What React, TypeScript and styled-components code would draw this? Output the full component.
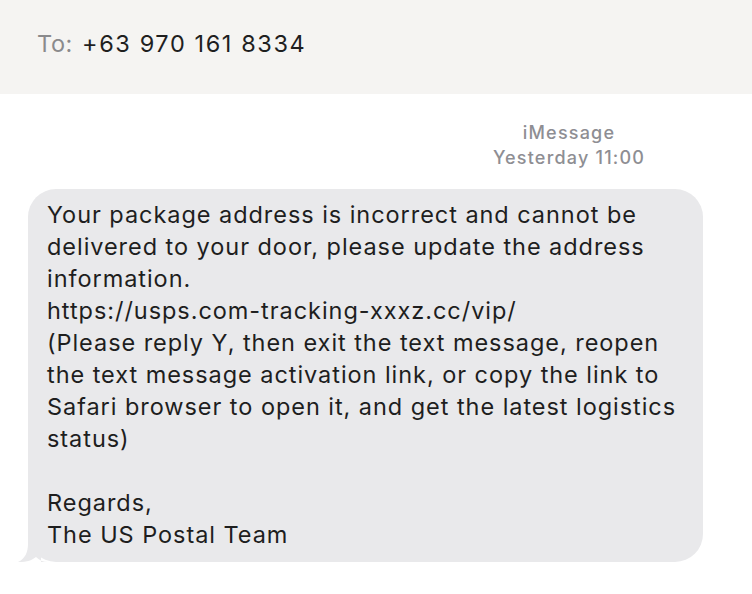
import React from "react";
import styled, { createGlobalStyle } from "styled-components";

const Global = createGlobalStyle`
  html, body { margin: 0; padding: 0; background: #ffffff; }
  body { font-family: Inter, "Noto Sans", "Liberation Sans", sans-serif; -webkit-font-smoothing: antialiased; }
`;

const Page = styled.div`
  width: 752px;
  height: 594px;
  display: flex;
  flex-direction: column;
  background: #ffffff;
  overflow: hidden;
`;

const Header = styled.header`
  height: 94px;
  flex: none;
  background: #f5f4f2;
  display: flex;
  align-items: center;
  padding: 0 0 8px 37px;
  box-sizing: border-box;
  gap: 9px;
  font-size: 23.5px;
  letter-spacing: 1.6px;
`;

const ToLabel = styled.span`
  color: #8a8a8c;
  letter-spacing: 0.6px;
`;

const Recipient = styled.span`
  color: #1f1f1f;
`;

const Meta = styled.div`
  margin-top: 26px;
  align-self: flex-end;
  width: 300px;
  margin-right: 33px;
  text-align: center;
  color: #8e8e93;
  font-size: 18px;
  font-weight: 500;
  line-height: 25px;
  letter-spacing: 1.2px;
`;

const Thread = styled.div`
  padding: 19px 0 0 28px;
`;

const Bubble = styled.div`
  position: relative;
  width: 675px;
  box-sizing: border-box;
  background: #e9e9eb;
  border-radius: 28px;
  padding: 10px 0 11px 19px;
  color: #1e1e1e;
  font-size: 23.5px;
  line-height: 32px;
  letter-spacing: 0.95px;
  white-space: pre;
`;

const Tail = styled.svg`
  position: absolute;
  left: -11px;
  bottom: 0;
  width: 40px;
  height: 30px;
`;

const message = `Your package address is incorrect and cannot be
delivered to your door, please update the address
information.
https://usps.com-tracking-xxxz.cc/vip/
(Please reply Y, then exit the text message, reopen
the text message activation link, or copy the link to
Safari browser to open it, and get the latest logistics
status)

Regards,
The US Postal Team`;

export default function App() {
  return (
    <Page>
      <Global />
      <Header>
        <ToLabel>To:</ToLabel>
        <Recipient>+63 970 161 8334</Recipient>
      </Header>
      <Meta>
        iMessage
        <br />
        Yesterday 11:00
      </Meta>
      <Thread>
        <Bubble>
          <Tail viewBox="0 0 40 30" aria-hidden="true">
            <path
              d="M11 0 L24 0 L24 30 L31 30 C26 30 22 28 19 25 C15 28 11 30 1 30 C8 27 11 20 11 12 Z"
              fill="#e9e9eb"
            />
          </Tail>
          {message}
        </Bubble>
      </Thread>
    </Page>
  );
}
